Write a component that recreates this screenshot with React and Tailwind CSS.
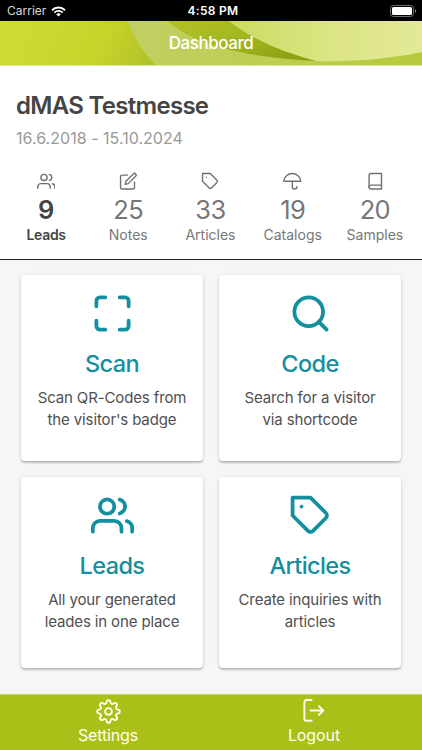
import React from 'react';
import { FiUsers, FiEdit, FiTag, FiUmbrella, FiBook, FiMaximize, FiSearch } from 'react-icons/fi';

const stats = [
  { label: 'Leads', value: 9, Icon: FiUsers, active: true },
  { label: 'Notes', value: 25, Icon: FiEdit },
  { label: 'Articles', value: 33, Icon: FiTag },
  { label: 'Catalogs', value: 19, Icon: FiUmbrella },
  { label: 'Samples', value: 20, Icon: FiBook },
];

const tiles = [
  { title: 'Scan', lines: ['Scan QR-Codes from', "the visitor's badge"], Icon: FiMaximize, height: 'h-[186px]' },
  { title: 'Code', lines: ['Search for a visitor', 'via shortcode'], Icon: FiSearch, height: 'h-[186px]' },
  { title: 'Leads', lines: ['All your generated', 'leades in one place'], Icon: FiUsers, height: 'h-[191px]' },
  { title: 'Articles', lines: ['Create inquiries with', 'articles'], Icon: FiTag, height: 'h-[191px]' },
];

// outline of the settings cog: a circle with eight soft teeth
const cogPoints = Array.from({ length: 160 }, (_, i) => {
  const a = (i / 160) * Math.PI * 2;
  const r = 9.8 + 1.6 * Math.tanh(1.6 * Math.cos(8 * a));
  return `${(12.5 + r * Math.cos(a)).toFixed(2)},${(12.5 + r * Math.sin(a)).toFixed(2)}`;
}).join(' ');

function StatusBar() {
  return (
    <div className="grid grid-cols-3 items-center h-[21px] bg-black text-white pt-px">
      <div className="flex items-center gap-[5px] pl-[7px]">
        <span className="text-[12px] leading-none text-[#d8d8d8]">Carrier</span>
        <svg width="15" height="11" viewBox="0 0 15 11" fill="none">
          <path d="M1 4.2a9.3 9.3 0 0 1 13 0" stroke="white" strokeWidth="1.9" />
          <path d="M3.3 6.6a6 6 0 0 1 8.4 0" stroke="white" strokeWidth="1.8" />
          <path d="M7.5 10.6 5.2 8.3a3.3 3.3 0 0 1 4.6 0z" fill="white" />
        </svg>
      </div>
      <span className="text-center text-[12px] leading-none font-semibold tracking-[0.3px] pl-1">4:58 PM</span>
      <svg className="justify-self-end mr-[5px]" width="27" height="12" viewBox="0 0 27 12" fill="none">
        <rect x="0.5" y="0.5" width="23" height="11" rx="2.8" stroke="#6b6b6b" />
        <rect x="2" y="2" width="20" height="8" rx="1.5" fill="white" />
        <path d="M25 4v4a2.2 2.2 0 0 0 0-4z" fill="#777" />
      </svg>
    </div>
  );
}

function Header() {
  return (
    <header className="relative flex items-center justify-center h-[45px] overflow-hidden border-b border-[#dde5a0]">
      <svg className="absolute inset-0" width="422" height="45" viewBox="0 0 422 45" preserveAspectRatio="none">
        <defs>
          <linearGradient id="base" x1="0" y1="0" x2="1" y2="0.1">
            <stop offset="0" stopColor="#d0dc35" />
            <stop offset="0.7" stopColor="#c5d32b" />
            <stop offset="1" stopColor="#b3c328" />
          </linearGradient>
          <linearGradient id="band" x1="0" y1="0" x2="1" y2="0">
            <stop offset="0" stopColor="#c1cf62" />
            <stop offset="0.5" stopColor="#bdce50" />
            <stop offset="1" stopColor="#b7c93a" />
          </linearGradient>
          <linearGradient id="leaf" x1="0" y1="0" x2="1" y2="0.6">
            <stop offset="0" stopColor="#b2c228" />
            <stop offset="0.6" stopColor="#a2b41f" />
            <stop offset="1" stopColor="#8fa012" />
          </linearGradient>
          <linearGradient id="glow" x1="0" y1="0" x2="1" y2="0">
            <stop offset="0" stopColor="#ccda62" />
            <stop offset="0.5" stopColor="#dbe482" />
            <stop offset="1" stopColor="#e3e997" />
          </linearGradient>
        </defs>
        <rect width="160" height="45" fill="url(#base)" />
        <path d="M128 0C134 18 144 33 157 45H422V0z" fill="url(#band)" />
        <path d="M167 0C194 23 240 36 316 40C290 26 262 14 229 0z" fill="url(#leaf)" />
        <path d="M229 0C252 18 281 31 316 40C352 41 388 38 422 31V0z" fill="url(#glow)" />
      </svg>
      <h1 className="relative text-[17px] leading-none font-medium text-white tracking-[-0.45px]">Dashboard</h1>
    </header>
  );
}

function Stat({ label, value, Icon, active }) {
  return (
    <div className={active ? 'flex flex-col items-center text-[#444444]' : 'flex flex-col items-center text-[#777777]'}>
      <Icon size={18.6} strokeWidth={1.8} className="text-[#707070]" />
      <span className={active ? 'mt-1 text-[25.5px] leading-[30px] font-semibold' : 'mt-1 text-[25.5px] leading-[30px] font-normal tracking-[-0.6px]'}>{value}</span>
      <span className={active ? 'text-[14px] leading-5 font-semibold tracking-[-0.3px]' : 'text-[14px] leading-5'}>{label}</span>
    </div>
  );
}

function Tile({ title, lines, Icon, height }) {
  return (
    <div className={`flex flex-col items-center pt-[17px] bg-white rounded-[4px] shadow-[0_2px_2px_rgba(0,0,0,0.22),0_0_4px_rgba(0,0,0,0.08)] ${height}`}>
      <Icon size={43} strokeWidth={2.1} className="text-[#138f9f]" />
      <h2 className="mt-3.5 text-[23.5px] leading-[30px] font-medium text-[#138f9f] tracking-[-0.6px]">{title}</h2>
      <p className="mt-2 text-center text-[15px] leading-[22px] text-[#505050] tracking-[-0.13px]">
        {lines[0]}
        <br />
        {lines[1]}
      </p>
    </div>
  );
}

function SettingsIcon() {
  return (
    <svg width="25" height="25" viewBox="0 0 25 25" fill="none" stroke="currentColor" strokeWidth="1.9" strokeLinejoin="round">
      <polygon points={cogPoints} />
      <circle cx="12.5" cy="12.5" r="3.4" />
    </svg>
  );
}

function LogoutIcon() {
  return (
    <svg width="24" height="24" viewBox="0 0 24 24" fill="none" stroke="currentColor" strokeWidth="1.9" strokeLinecap="round" strokeLinejoin="round">
      <path d="M9.6 21.8H4.4a2 2 0 0 1-2-2V3a2 2 0 0 1 2-2h5.2" />
      <path d="M8.4 11.5h12.8M16.9 7.1l4.4 4.4-4.4 4.4" />
    </svg>
  );
}

export default function App() {
  return (
    <div className="flex flex-col w-[422px] h-[750px] overflow-hidden bg-[#f6f6f6] font-['Inter',sans-serif]">
      <StatusBar />
      <Header />

      <section className="h-[194px] bg-white border-b border-[#222222]">
        <div className="px-4 pt-[25px]">
          <h2 className="text-[24px] leading-[29px] font-semibold text-[#444444] tracking-[-0.7px]">dMAS Testmesse</h2>
          <p className="mt-1.5 text-[16px] leading-6 text-[#999999] tracking-[0.03px]">16.6.2018 - 15.10.2024</p>
        </div>
        <div className="grid grid-cols-5 pl-[5px] pr-1.5 mt-[22px]">
          {stats.map((stat) => (
            <Stat key={stat.label} {...stat} />
          ))}
        </div>
      </section>

      <main className="grid grid-cols-2 content-start gap-4 flex-1 pl-[21px] pr-[21px] pt-[15px]">
        {tiles.map((tile) => (
          <Tile key={tile.title} {...tile} />
        ))}
      </main>

      <nav className="flex h-14 bg-[#aabf18] border-t border-[#c5d268] text-[#fffff0]">
        <button className="flex flex-col items-center w-[216px] pt-[4px]">
          <SettingsIcon />
          <span className="mt-px text-[16px] leading-5 tracking-[-0.15px]">Settings</span>
        </button>
        <button className="flex flex-col items-center w-[196px] pt-[4px]">
          <LogoutIcon />
          <span className="mt-0.5 text-[16px] leading-5 tracking-[-0.1px]">Logout</span>
        </button>
      </nav>
    </div>
  );
}
